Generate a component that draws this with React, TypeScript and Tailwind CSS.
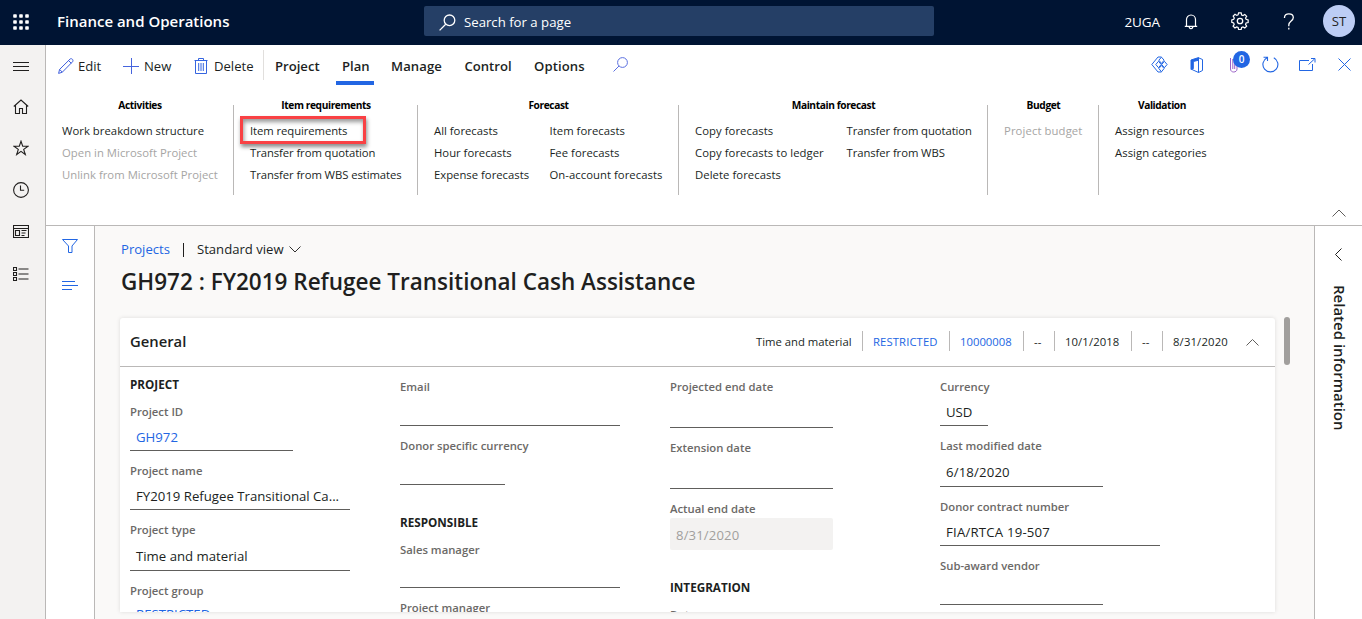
import type { ReactNode } from "react";

type IconProps = { w: number; h: number; className?: string; sw?: number; children: ReactNode };

function Icon({ w, h, className = "", sw = 1, children }: IconProps) {
  return (
    <svg
      width={w}
      height={h}
      viewBox={`0 0 ${w} ${h}`}
      fill="none"
      stroke="currentColor"
      strokeWidth={sw}
      className={`block shrink-0 ${className}`}
    >
      {children}
    </svg>
  );
}

function TopBar() {
  return (
    <header className="flex h-[45px] shrink-0 items-center bg-[#001433] text-white">
      <svg width="16" height="16" viewBox="0 0 16 16" fill="currentColor" className="mb-[2px] ml-[13px] shrink-0">
        {[0, 6, 12].map((y) => [0, 6, 12].map((x) => <rect key={`${x}-${y}`} x={x + 0.2} y={y + 0.3} width="3.6" height="3.4" rx="0.8" />))}
      </svg>
      <div className="ml-7 w-[367px] pb-0.5 text-[15px] font-semibold whitespace-nowrap">Finance and Operations</div>
      <div className="mb-[3px] flex h-[30px] w-[510px] items-center rounded-[2px] bg-[#253f66] pl-[15px]">
        <Icon w={17} h={17} sw={1.3} className="mt-[3px]">
          <circle cx="10.5" cy="6.3" r="5.3" />
          <path d="M6.7 10.2L0.6 16.4" />
        </Icon>
        <span className="ml-2 pt-[4px] text-[13.2px]">Search for a page</span>
      </div>
      <div className="ml-auto flex items-center">
        <span className="text-[13.5px] tracking-[-0.1px]">2UGA</span>
        <Icon w={14} h={16} sw={1.2} className="mb-[1px] ml-6">
          <path d="M2.5 12V5.6C2.5 3 4.4 1 7 1s4.500 2 4.500 4.600V12M0.800 12.300h12.400M5.200 12.500c0 2.800 3.600 2.800 3.600 0" />
        </Icon>
        <Icon w={18} h={18} sw={1.3} className="mb-[3px] ml-[33px]">
          <path d="M7.600 1h2.800l.5 2.200 1.500.6 1.900-1.200 2 2-1.200 1.900.6 1.400 2.200.6v2.800l-2.200.5-.6 1.500 1.200 1.900-2 2-1.900-1.200-1.500.6-.5 2.200H7.600l-.5-2.200-1.500-.6-1.900 1.200-2-2 1.200-1.900-.6-1.500L.3 11V8.500l2.100-.6.6-1.500-1.200-1.900 2-2 1.900 1.200 1.400-.6z" transform="translate(.5 0) scale(.93)" />
          <circle cx="9" cy="9" r="2.700" />
        </Icon>
        <Icon w={12} h={17} sw={1.3} className="mb-[3px] ml-[34px]">
          <path d="M1.500 5V4.500C1.500 2.300 3.200.8 5.800.8s4.500 1.500 4.500 3.700c0 3.500-4.500 3.700-4.500 7.500v1.200M5.800 14.800v1.600" />
        </Icon>
        <div className="mr-[7px] mb-[3px] ml-7 flex size-8 items-center justify-center rounded-full bg-[#bccdf5] pt-px text-[13.1px] text-[#242424]">ST</div>
      </div>
    </header>
  );
}

function NavRail() {
  return (
    <nav className="flex w-[46px] shrink-0 flex-col border-r border-[#bab8b7] bg-[#f3f2f1] pl-[13px] text-[#201f1e]">
      <Icon w={16} h={10} className="mt-4">
        <path d="M0 1.500h16M0 5.500h16M0 9.500h16" />
      </Icon>
      <Icon w={16} h={16} sw={1.1} className="mt-7">
        <path d="M.8 7.500L8 1l7.200 6.500M2.500 6.200v8.300h4v-5h3v5h4V6.200" />
      </Icon>
      <Icon w={16} h={16} sw={1.1} className="mt-[25px]">
        <path d="M8 1.200l1.700 5h5.300l-4.300 3.200 1.600 5.100L8 11.400l-4.300 3.100 1.600-5.100L1 6.200h5.300z" />
      </Icon>
      <Icon w={16} h={16} sw={1.1} className="mt-[26px]">
        <circle cx="8" cy="8" r="7.400" />
        <path d="M7.500 3.500v4.700h3.700" />
      </Icon>
      <Icon w={16} h={13} sw={1.1} className="mt-[27px]">
        <path d="M.5.5h15v12H.5zM.5 3.500h15M2.500 5.500h4v5h-4zM8.500 5.500h5M8.500 8h4M8.500 10.500h3" />
      </Icon>
      <Icon w={16} h={15} sw={1.1} className="mt-[29px]">
        <path d="M.5.5h3v3h-3zM.5 5.500h3v3h-3zM.5 10.500h3v3h-3zM5.500 2h10M5.500 7h10M5.500 12h10" />
      </Icon>
    </nav>
  );
}

function ActionBar() {
  return (
    <div className="flex h-[41px] items-center pl-3 text-[13.1px] text-[#201f1e]">
      <Icon w={16} h={16} className="text-[#3f5fdd]">
        <path d="M.6 15.400l1-4L12 1.100c1.700-1.300 3.800.8 2.600 2.600L4.300 14.200zM1.600 11.400l2.700 2.800M10.500 2.500l2.800 2.800" />
      </Icon>
      <span className="ml-1 w-[45px] pt-[2px]">Edit</span>
      <Icon w={16} h={16} className="text-[#4664dd]">
        <path d="M8.500 0v16M0 8.500h16" />
      </Icon>
      <span className="ml-[5px] w-[50px] pt-[2px]">New</span>
      <Icon w={14} h={16} className="text-[#3565e0]">
        <path d="M.5 2.500h13M4.500 2.500v-2h5v2M1.500 2.500v13h11v-13M4.700 5v8M7 5v8M9.300 5v8" />
      </Icon>
      <span className="ml-[6px] w-[49px] pt-[2px]">Delete</span>
      <span className="mb-px h-[30px] w-px bg-[#e1dfdd]" />
      <div className="flex items-center self-stretch font-semibold">
        <span className="ml-[11px] w-[61px] pt-[2px]">Project</span>
        <span className="mb-px flex self-stretch border-b-4 border-[#2266e3] px-[6px]">
          <span className="flex h-[41px] w-[26px] items-center pt-[2px]">Plan</span>
        </span>
        <span className="ml-[17px] w-[73.5px] pt-[2px] tracking-[0.1px]">Manage</span>
        <span className="w-[69.5px] pt-[2px]">Control</span>
        <span className="w-[79px] pt-[2px] tracking-[0.1px]">Options</span>
      </div>
      <Icon w={15} h={15} className="mb-[2px] text-[#5a6fe0]">
        <circle cx="9.500" cy="5.500" r="4.900" />
        <path d="M6 9L.5 14.500" />
      </Icon>
      <div className="mb-[2px] ml-auto flex items-center text-[#2266e3]">
        <Icon w={17} h={17}>
          <path d="M10.500 1H7L.8 8.500 7 16h3.500" />
          <path d="M10.500 1.200l2.600 3-2.600 3.300-2.700-3.300zM10.500 9.500l2.600 3-2.600 3.300-2.700-3.300zM13.400 5.300l2.700 3.200-2.700 3.200-2.700-3.200zM7.500 5.300l2.700 3.200-2.700 3.200-2.700-3.200z" strokeLinejoin="round" />
        </Icon>
        <Icon w={14} h={16} className="ml-[22px]">
          <path d="M12.500 2.500v11L8.500 15.500V.8zM8.500 15.500L2 12.500" />
          <path d="M8.500.6L1 3v9.500l2.300-.8V4.500l5.200-1.300z" fill="currentColor" />
        </Icon>
        <div className="relative ml-[25px] h-[17px] w-[10px] text-[#9b62c8]">
          <Icon w={10} h={17}>
            <path d="M1.500 2v11c0 4 6.500 4 6.500 0V4M3.800 13V3M5.700 13V3" />
          </Icon>
          <span className="absolute -top-[5px] left-[4px] flex size-[17px] items-center justify-center rounded-full bg-[#2266e3] text-[10px] font-semibold text-white">0</span>
        </div>
        <Icon w={17} h={17} sw={1.1} className="ml-[23px]">
          <path d="M5 1.700a7.500 7.500 0 1 0 6.800 0M1.500 1.200H5.500V5" />
        </Icon>
        <Icon w={17} h={13} className="ml-5">
          <path d="M10 2.500H.5v10h13V6M9.500 6.500l6-5.500M12 .5h4v4" />
        </Icon>
        <Icon w={13} h={13} className="mr-[11px] ml-[22px]">
          <path d="M.5.5l12 12M12.500.5l-12 12" />
        </Icon>
      </div>
    </div>
  );
}

type GroupProps = {
  title: string;
  box: string;
  columns: { width: string; items: string[] }[];
  disabled?: string[];
  framed?: string;
  last?: boolean;
};

function RibbonGroup({ title, box, columns, disabled = [], framed, last }: GroupProps) {
  return (
    <div className={`h-[90px] pl-4 ${box} ${last ? "" : "border-r border-[#bab8b7]"}`}>
      <div className="-mt-[7px] mr-[15px] mb-[7px] h-[15px] text-center text-[10.2px] leading-[14px] font-bold tracking-[-0.4px] whitespace-nowrap">{title}</div>
      <div className="flex">
        {columns.map((col) => (
          <div key={col.items[0]} className={`shrink-0 ${col.width}`}>
            {col.items.map((item) => (
              <div key={item} className={`relative h-[22px] text-[11.3px] leading-[22px] whitespace-nowrap ${disabled.includes(item) ? "text-[#a6a5a4]" : "text-[#201f1e]"}`}>
                {item}
                {framed === item && (
                  <span className="absolute -top-1 -left-[10px] z-10 h-7 w-[126px] border-[3px] border-[#f94144] shadow-[1px_3px_4px_rgba(0,0,0,0.45),inset_1px_3px_4px_rgba(0,0,0,0.4)]" />
                )}
              </div>
            ))}
          </div>
        ))}
      </div>
    </div>
  );
}

function Ribbon() {
  return (
    <section className="flex h-[181px] shrink-0 flex-col border-b border-[#bab8b7] bg-white">
      <ActionBar />
      <div className="mt-[19px] flex">
        <RibbonGroup
          title="Activities"
          box="w-[188px]"
          columns={[{ width: "w-[156px] tracking-[0.03px]", items: ["Work breakdown structure", "Open in Microsoft Project", "Unlink from Microsoft Project"] }]}
          disabled={["Open in Microsoft Project", "Unlink from Microsoft Project"]}
        />
        <RibbonGroup
          title="Item requirements"
          box="w-[184px]"
          columns={[{ width: "w-[152px] tracking-[-0.08px]", items: ["Item requirements", "Transfer from quotation", "Transfer from WBS estimates"] }]}
          framed="Item requirements"
        />
        <RibbonGroup
          title="Forecast"
          box="w-[261px]"
          columns={[
            { width: "w-[115.5px]", items: ["All forecasts", "Hour forecasts", "Expense forecasts"] },
            { width: "w-[113.5px] tracking-[0.04px]", items: ["Item forecasts", "Fee forecasts", "On-account forecasts"] },
          ]}
        />
        <RibbonGroup
          title="Maintain forecast"
          box="w-[309px]"
          columns={[
            { width: "w-[151.5px] tracking-[0.06px]", items: ["Copy forecasts", "Copy forecasts to ledger", "Delete forecasts"] },
            { width: "w-[125.5px] tracking-[-0.08px]", items: ["Transfer from quotation", "Transfer from WBS"] },
          ]}
        />
        <RibbonGroup title="Budget" box="w-[111px]" columns={[{ width: "w-[79px] tracking-[0.1px]", items: ["Project budget"] }]} disabled={["Project budget"]} />
        <RibbonGroup title="Validation" box="w-[125px]" columns={[{ width: "w-[93px] tracking-[0.05px]", items: ["Assign resources", "Assign categories"] }]} last />
      </div>
      <Icon w={14} h={8} className="mt-[14px] mr-4 self-end text-[#605e5c]">
        <path d="M.5 7.500L7 1l6.500 6.500" />
      </Icon>
    </section>
  );
}

function Section({ children, className = "" }: { children: ReactNode; className?: string }) {
  return <div className={`h-4 text-[11.7px] leading-4 font-bold text-[#201f1e] ${className}`}>{children}</div>;
}

type FieldProps = { label: string; value?: string; size?: string; link?: boolean };

const labelText = "h-4 text-[11.3px] leading-4 font-semibold whitespace-nowrap text-[#6b6967]";

function Field({ label, value, size = "h-[31px] w-[220px] pt-[6px]", link }: FieldProps) {
  return (
    <div className="mb-3">
      <div className={labelText}>{label}</div>
      <div className={`flex items-center border-b border-[#605e5c] pl-[6px] text-[13.2px] whitespace-nowrap ${size} ${link ? "text-[#2266e3]" : "text-[#201f1e]"}`}>{value}</div>
    </div>
  );
}

function GeneralCard() {
  const divider = <span className="mb-[2px] h-5 w-px bg-[#bab8b7]" />;
  return (
    <section className="h-[294px] w-[1155px] overflow-hidden rounded-t-[3px] bg-white shadow-[0_0_4px_rgba(0,0,0,0.12)]">
      <div className="flex h-[49px] items-center border-b border-[#bab8b7] pl-[10px] text-[#201f1e]">
        <h2 className="pb-[2px] text-[14.8px] font-semibold">General</h2>
        <div className="ml-auto flex items-center text-[11.3px] whitespace-nowrap">
          <span className="w-[106px]">Time and material</span>
          {divider}
          <span className="w-[86px] pl-[10px] tracking-[0.1px] text-[#2266e3]">RESTRICTED</span>
          {divider}
          <span className="w-[73px] pl-[10px] text-[#2266e3]">10000008</span>
          {divider}
          <span className="w-[30px] pl-[10px]">--</span>
          {divider}
          <span className="w-[76px] pl-[10px] tracking-[0.1px]">10/1/2018</span>
          {divider}
          <span className="w-[30px] pl-[10px]">--</span>
          {divider}
          <span className="w-[83px] pl-[10px] tracking-[0.15px]">8/31/2020</span>
        </div>
        <Icon w={13} h={7} className="mr-4 text-[#605e5c]">
          <path d="M.5 6.500l6-6 6 6" />
        </Icon>
      </div>
      <div className="flex pl-[10px]">
        <div className="w-[270px] pt-[9px]">
          <Section className="mb-3">PROJECT</Section>
          <Field label="Project ID" value="GH972" size="h-[31px] w-[163px] pt-[6px]" link />
          <Field label="Project name" value="FY2019 Refugee Transitional Ca..." />
          <Field label="Project type" value="Time and material" size="h-[33px] w-[220px] pt-[6px]" />
          <Field label="Project group" value="RESTRICTED" size="h-[31px] w-[220px] pt-px" link />
        </div>
        <div className="w-[270px] pt-3">
          <Field label="Email" />
          <Field label="Donor specific currency" size="h-[31px] w-[105px]" />
          <Section className="mt-[29px] mb-3">RESPONSIBLE</Section>
          <Field label="Sales manager" size="h-[30px] w-[220px]" />
          <Field label="Project manager" />
        </div>
        <div className="w-[270px] pt-3">
          <Field label="Projected end date" size="h-[33px] w-[163px]" />
          <Field label="Extension date" size="h-[33px] w-[163px]" />
          <div className={labelText}>Actual end date</div>
          <div className="mt-px flex h-8 w-[163px] items-center rounded-[2px] bg-[#f3f2f1] pt-[3px] pl-[6px] text-[13.1px] tracking-[0.15px] text-[#a19f9d]">8/31/2020</div>
          <Section className="mt-[29px] mb-3">INTEGRATION</Section>
          <Field label="Data" />
        </div>
        <div className="pt-3">
          <Field label="Currency" value="USD" size="h-[31px] w-[48px] pt-[6px]" />
          <Field label="Last modified date" value="6/18/2020" size="h-[33px] w-[163px] pt-[6px] tracking-[0.15px]" />
          <Field label="Donor contract number" value="FIA/RTCA 19-507" size="h-[31px] w-[220px] pt-[6px] tracking-[0.2px]" />
          <Field label="Sub-award vendor" size="h-[31px] w-[163px]" />
        </div>
      </div>
    </section>
  );
}

function Workspace() {
  return (
    <div className="flex min-h-0 flex-1">
      <aside className="flex w-[49px] shrink-0 flex-col border-r border-[#bab8b7] bg-white pl-4 text-[#2266e3]">
        <Icon w={16} h={15} className="mt-3">
          <path d="M.5 1.500h15L10 8v6.500H6.500V8z" />
        </Icon>
        <Icon w={16} h={10} className="mt-[27px]">
          <path d="M0 1.500h13M0 5.500h16M0 9.500h10" />
        </Icon>
      </aside>
      <main className="flex min-w-0 flex-1 flex-col bg-[#faf9f8]">
        <div className="mt-[13px] ml-[26px] flex h-5 items-center text-[13.1px] whitespace-nowrap text-[#201f1e]">
          <span className="w-[62px] pt-[2px] text-[#2266e3]">Projects</span>
          <span className="mt-px h-[14px] w-px bg-[#201f1e]" />
          <span className="ml-[13px] w-[92px] pt-[2px]">Standard view</span>
          <Icon w={12} h={7} className="text-[#323130]">
            <path d="M.5.5L6 6 11.500.5" />
          </Icon>
        </div>
        <h1 className="mt-[7px] ml-[26px] h-8 text-[22.5px] leading-8 font-semibold whitespace-nowrap text-[#201f1e]">GH972 : FY2019 Refugee Transitional Cash Assistance</h1>
        <div className="mt-5 ml-[25px] flex">
          <GeneralCard />
          <span className="-mt-px ml-[9px] h-12 w-[6px] rounded-full bg-[#a19f9d]" />
        </div>
      </main>
      <aside className="flex w-12 shrink-0 flex-col items-center border-l border-[#bab8b7] bg-white text-[#201f1e]">
        <Icon w={7} h={13} className="mt-[22px]">
          <path d="M6.500.5l-6 6 6 6" />
        </Icon>
        <span className="mt-[24px] ml-[2px] text-[15px] font-semibold whitespace-nowrap [writing-mode:vertical-rl]">Related information</span>
      </aside>
    </div>
  );
}

export default function App() {
  return (
    <div className="flex h-[619px] w-[1362px] flex-col overflow-hidden bg-white font-['Open_Sans','Noto_Sans',sans-serif]">
      <TopBar />
      <div className="flex min-h-0 flex-1">
        <NavRail />
        <div className="flex min-w-0 flex-1 flex-col">
          <Ribbon />
          <Workspace />
        </div>
      </div>
    </div>
  );
}
